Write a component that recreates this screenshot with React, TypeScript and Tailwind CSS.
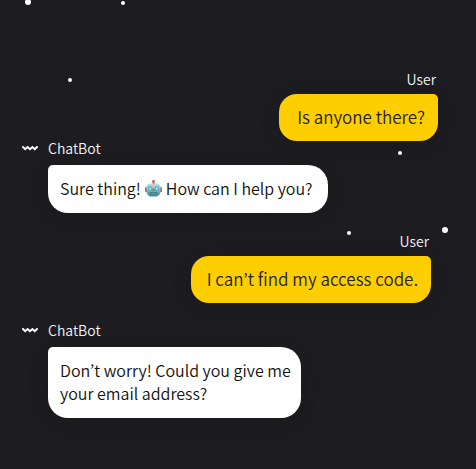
import type { ReactNode } from "react";

function Wave() {
  return (
    <svg className="h-2 w-4 shrink-0" viewBox="0 0 16 8" fill="none" stroke="white" strokeWidth="2" strokeLinecap="round" strokeLinejoin="miter" aria-hidden="true">
      <path d="M1 3L3.2 5.2L5.6 3L8 5.2L10.4 3L12.8 5.2L15 3" />
    </svg>
  );
}

function Robot() {
  return (
    <svg className="mx-1 inline-block size-[17px] align-[-2px]" viewBox="0 0 36 36" role="img" aria-label="robot">
      <defs>
        <linearGradient id="face" x1="0" y1="0" x2="0" y2="1">
          <stop offset="0" stopColor="#c3dfe2" />
          <stop offset="0.5" stopColor="#79bdc6" />
          <stop offset="1" stopColor="#3c8792" />
        </linearGradient>
      </defs>
      <path d="M18 3V9" stroke="#a77b61" strokeWidth="3" />
      <circle cx="18" cy="3" r="2.8" fill="#d94e37" />
      <rect x="0" y="15" width="5" height="11" rx="2" fill="#c96a55" />
      <rect x="31" y="15" width="5" height="11" rx="2" fill="#c96a55" />
      <path d="M9 8H27Q33 9 33 16L32 28Q30 34 25 35H11Q6 34 4 28L3 16Q3 9 9 8Z" fill="url(#face)" />
      <path d="M14 8H22" stroke="#e4b63b" strokeWidth="2.5" />
      <circle cx="11" cy="18" r="4.6" fill="#3fb9cc" />
      <circle cx="25" cy="18" r="4.6" fill="#3fb9cc" />
      <circle cx="11" cy="18" r="2" fill="#d4f6f5" />
      <circle cx="25" cy="18" r="2" fill="#d4f6f5" />
      <path d="M18 17L15 23H21Z" fill="#d94534" />
      <rect x="10" y="26" width="16" height="4" rx="1.5" fill="#245b66" />
      <path d="M12 28H24" stroke="#d8ebeb" strokeWidth="1.2" />
    </svg>
  );
}

function UserMessage({ children, className }: { children: ReactNode; className: string }) {
  return (
    <article className="flex flex-col items-end gap-[7px]">
      <h2 className="pr-0.5 text-sm leading-4 text-gray-100">User</h2>
      <p className={`rounded-[18px] rounded-tr-[5px] bg-[#ffce00] pt-2.5 pr-[13px] pb-3 text-[17px] leading-[25px] text-[#252525] shadow-[0_4px_20px_rgba(0,0,0,0.12)] ${className}`}>
        {children}
      </p>
    </article>
  );
}

function BotMessage({ children, className }: { children: ReactNode; className: string }) {
  return (
    <article className="flex flex-col gap-2.5 pl-[22px]">
      <header className="flex items-center gap-2.5">
        <Wave />
        <h2 className="text-sm leading-[14px] text-gray-100">ChatBot</h2>
      </header>
      <p className={`ml-[26px] w-fit rounded-[20px] rounded-tl-[5px] bg-white pt-3 pb-[13px] pl-3 text-base leading-[23px] text-[#111111] shadow-[0_4px_20px_rgba(0,0,0,0.12)] ${className}`}>
        {children}
      </p>
    </article>
  );
}

function Stars() {
  return (
    <div aria-hidden="true" className="pointer-events-none absolute inset-0 overflow-hidden">
      <i className="absolute -top-px left-[25px] size-1.5 rounded-full bg-white" />
      <i className="absolute top-px left-[121px] size-1 rounded-full bg-white" />
      <i className="absolute top-[78px] left-[68px] size-1 rounded-full bg-white" />
      <i className="absolute top-[151px] left-[398px] size-1 rounded-full bg-white" />
      <i className="absolute top-[231px] left-[347px] size-1 rounded-full bg-white" />
      <i className="absolute top-[227px] left-[442px] size-1.5 rounded-full bg-white" />
    </div>
  );
}

export default function App() {
  return (
    <main className="relative min-h-screen bg-[#1d1c20] pt-[71px] font-['Noto_Sans_CJK_KR','Noto_Sans',sans-serif] font-[350]">
      <Stars />
      <section aria-label="Conversation" className="relative flex flex-col gap-5">
        <div>
          <div className="pr-[38px]">
            <UserMessage className="pl-[18px]">Is anyone there?</UserMessage>
          </div>
          <BotMessage className="pr-[15px]">
            Sure thing!<Robot />How can I help you?
          </BotMessage>
        </div>
        <div className="pr-[45px]">
          <UserMessage className="pl-4">I can’t find my access code.</UserMessage>
        </div>
        <BotMessage className="pr-2.5">
          Don’t worry! Could you give me
          <br />
          your email address?
        </BotMessage>
      </section>
    </main>
  );
}
